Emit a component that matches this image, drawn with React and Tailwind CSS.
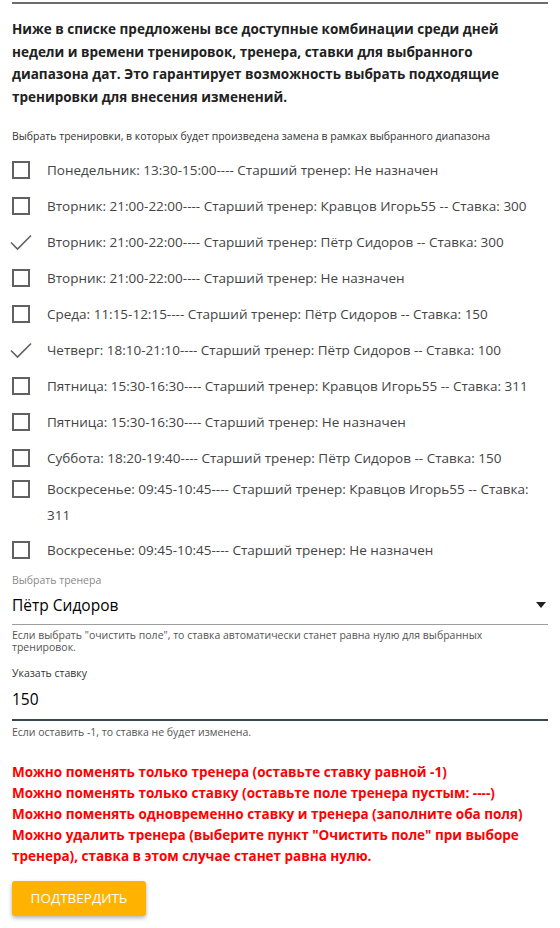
import { useState } from "react";

const trainings = [
  { text: "Понедельник: 13:30-15:00---- Старший тренер: Не назначен", checked: false },
  { text: "Вторник: 21:00-22:00---- Старший тренер: Кравцов Игорь55 -- Ставка: 300", checked: false },
  { text: "Вторник: 21:00-22:00---- Старший тренер: Пётр Сидоров -- Ставка: 300", checked: true },
  { text: "Вторник: 21:00-22:00---- Старший тренер: Не назначен", checked: false },
  { text: "Среда: 11:15-12:15---- Старший тренер: Пётр Сидоров -- Ставка: 150", checked: false },
  { text: "Четверг: 18:10-21:10---- Старший тренер: Пётр Сидоров -- Ставка: 100", checked: true },
  { text: "Пятница: 15:30-16:30---- Старший тренер: Кравцов Игорь55 -- Ставка: 311", checked: false },
  { text: "Пятница: 15:30-16:30---- Старший тренер: Не назначен", checked: false },
  { text: "Суббота: 18:20-19:40---- Старший тренер: Пётр Сидоров -- Ставка: 150", checked: false },
  { text: "Воскресенье: 09:45-10:45---- Старший тренер: Кравцов Игорь55 -- Ставка: 311", checked: false, wrap: true },
  { text: "Воскресенье: 09:45-10:45---- Старший тренер: Не назначен", checked: false },
];

function Check({ checked }) {
  if (checked) {
    return (
      <svg width="24" height="24" viewBox="0 0 24 24" className="shrink-0">
        <path d="M2 12.5 L8.5 19 L22 5.5" fill="none" stroke="#616161" strokeWidth="1.6" />
      </svg>
    );
  }
  return (
    <div className="w-6 h-6 shrink-0 flex items-center justify-center">
      <div className="w-[18px] h-[18px] border-2 border-[#616161]" />
    </div>
  );
}

function App() {
  const [items] = useState(trainings);

  return (
    <div className="px-3 pt-[2px] pb-3 bg-white text-[#212121]" style={{ fontFamily: '"Open Sans", sans-serif' }}>
      <div className="h-[2px] bg-[#6b6b6b]" />
      <p className="mt-[14px] text-[13.5px] leading-[22.7px] font-bold text-[#212121]">
        Ниже в списке предложены все доступные комбинации среди дней недели и времени тренировок, тренера, ставки для выбранного диапазона дат. Это гарантирует возможность выбрать подходящие тренировки для внесения изменений.
      </p>
      <p className="mt-[20px] text-[10.5px] leading-[14px] text-[#333]">
        Выбрать тренировки, в которых будет произведена замена в рамках выбранного диапазона
      </p>
      <div className="mt-[9px] flex flex-col">
        {items.map((item, key) => (
          <div key={key} className={item.wrap ? "flex items-start pt-0 pb-[4px]" : "flex items-start py-[5px]"}>
            <div className="mt-[1px] -ml-[3px]">
              <Check checked={item.checked} />
            </div>
            <span className="ml-[14px] text-[13.5px] leading-[26px] text-[#444]">{item.text}</span>
          </div>
        ))}
      </div>

      {/* тренер */}
      <div className="mt-[5px]">
        <div className="text-[10.5px] leading-[14px] text-[#8a8a8a]">Выбрать тренера</div>
        <div className="flex items-center justify-between border-b border-[#9e9e9e] h-[38px]">
          <span className="text-[15.5px] text-black">Пётр Сидоров</span>
          <svg width="10" height="6" viewBox="0 0 10 6" className="mr-[2px]">
            <path d="M0 0 L10 0 L5 6 Z" fill="#212121" />
          </svg>
        </div>
        <div className="mt-[4px] text-[10.5px] leading-[12px] text-[#555]">
          Если выбрать "очистить поле", то ставка автоматически станет равна нулю для выбранных тренировок.
        </div>
      </div>

      {/* ставка */}
      <div className="mt-[13px]">
        <div className="text-[10.5px] leading-[14px] text-[#333]">Указать ставку</div>
        <div className="flex items-center border-b-2 border-[#37474f] h-[41px]">
          <span className="text-[15.5px] text-black">150</span>
        </div>
        <div className="mt-[5px] text-[10.5px] leading-[12px] text-[#555]">
          Если оставить -1, то ставка не будет изменена.
        </div>
      </div>

      <div className="mt-[24px] text-[13.5px] leading-[21px] font-bold text-[#ff0000]">
        <div>Можно поменять только тренера (оставьте ставку равной -1)</div>
        <div>Можно поменять только ставку (оставьте поле тренера пустым: ----)</div>
        <div>Можно поменять одновременно ставку и тренера (заполните оба поля)</div>
        <div>
          Можно удалить тренера (выберите пункт "Очистить поле" при выборе тренера), ставка в этом случае станет равна нулю.
        </div>
      </div>

      <button className="mt-[14px] h-[35px] w-[134px] bg-[#ffb300] text-white text-[13.5px] uppercase rounded-[3px] shadow-[0_2px_4px_rgba(0,0,0,0.3)]">
        Подтвердить
      </button>
    </div>
  );
}

export default App;
